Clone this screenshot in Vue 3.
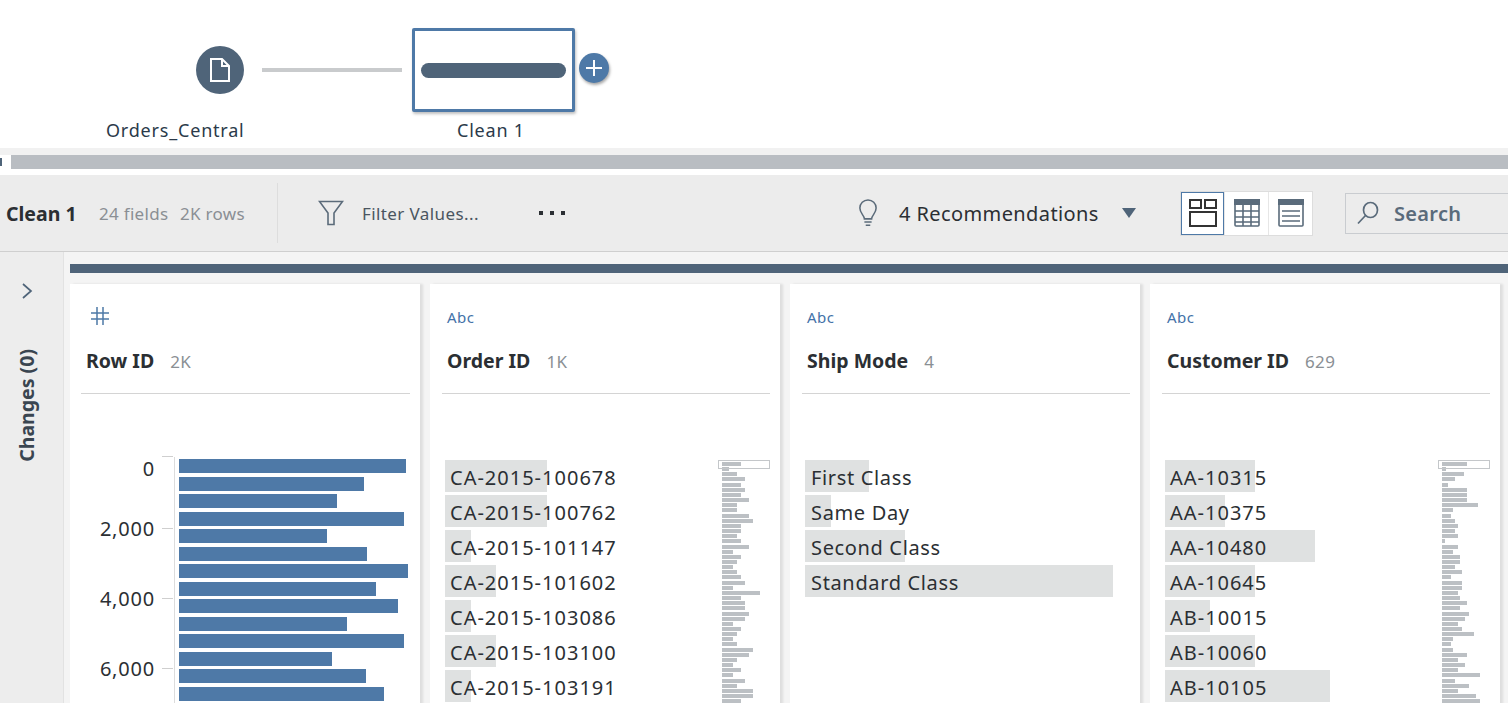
<template>
  <div class="app">
    <div class="flow-pane">
      <div class="step-icon">
        <svg width="24" height="28" viewBox="0 0 24 28" fill="none" stroke="#fff" stroke-width="2">
          <path d="M3 3h11l7 7v15H3z" />
          <path d="M14 3v7h7" />
        </svg>
      </div>
      <div class="step-label source-label">Orders_Central</div>
      <div class="link"></div>
      <div class="clean-box"><div class="clean-bar"></div></div>
      <div class="add-btn">
        <svg width="18" height="18" viewBox="0 0 18 18" stroke="#fff" stroke-width="2"><path d="M9 1v16M1 9h16" /></svg>
      </div>
      <div class="step-label clean-label">Clean 1</div>
    </div>

    <div class="splitter">
      <span class="grip"></span>
      <div class="thumb"></div>
    </div>

    <div class="toolbar">
      <div class="tb-title">Clean 1</div>
      <div class="tb-meta">24 fields</div>
      <div class="tb-meta second">2K rows</div>
      <div class="tb-divider"></div>
      <svg class="filter-icon" width="26" height="26" viewBox="0 0 26 26" fill="none" stroke="#5b6b7a" stroke-width="1.6">
        <path d="M1.500 1.500h23L16 13v11.500h-6V13z" />
      </svg>
      <div class="tb-filter">Filter Values...</div>
      <div class="tb-dots"><i></i><i></i><i></i></div>
      <div class="tb-spacer"></div>
      <svg class="bulb" width="20" height="28" viewBox="0 0 22 31" fill="none" stroke="#5b6b7a" stroke-width="1.7">
        <path d="M7 22c0-4-5-6-5-12a9 9 0 0 1 18 0c0 6-5 8-5 12z" />
        <path d="M7 25.500h8M8.500 29h5" />
      </svg>
      <div class="tb-rec">4 Recommendations</div>
      <div class="caret"></div>
      <div class="views">
        <div class="view active">
          <svg width="28" height="28" viewBox="0 0 28 28" fill="none" stroke="#333" stroke-width="2">
            <rect x="1" y="1" width="11" height="8" />
            <rect x="16" y="1" width="11" height="8" />
            <rect x="1" y="13" width="26" height="14" />
          </svg>
        </div>
        <div class="view">
          <svg width="26" height="28" viewBox="0 0 26 28" fill="none" stroke="#5a6b7b" stroke-width="1.6">
            <rect x="1" y="1" width="24" height="26" rx="1" />
            <path d="M0 3h26" stroke-width="6" />
            <path d="M1 12h24M1 18h24M1 23h24M9 6v21M17 6v21" />
          </svg>
        </div>
        <div class="view">
          <svg width="26" height="28" viewBox="0 0 26 28" fill="none" stroke="#5a6b7b" stroke-width="1.6">
            <rect x="1" y="1" width="24" height="26" rx="1" />
            <path d="M0 3h26" stroke-width="6" />
            <path d="M4 12h18M4 17h18M4 22h18" />
          </svg>
        </div>
      </div>
      <div class="search">
        <svg width="22" height="24" viewBox="0 0 22 24" fill="none" stroke="#5a6b7b" stroke-width="1.7">
          <ellipse cx="13.500" cy="9" rx="7" ry="7.500" />
          <path d="M8.500 14.500L1 22.500" />
        </svg>
        <span>Search</span>
      </div>
    </div>

    <div class="content">
      <aside class="changes">
        <svg width="12" height="18" viewBox="0 0 12 18" fill="none" stroke="#4f6479" stroke-width="1.7">
          <path d="M2 2l8 7-8 7" />
        </svg>
        <div class="changes-label">Changes (0)</div>
      </aside>

      <main class="profile">
        <div class="profile-bar"></div>
        <div class="cards">
          <section class="card">
            <header class="card-head first">
              <div class="type">
                <svg width="18" height="18" viewBox="0 0 18 18" stroke="#4e79a7" stroke-width="1.5">
                  <path d="M6 0v18M12 0v18M0 6h18M0 12h18" />
                </svg>
              </div>
              <div class="title"><b>Row ID</b><span>2K</span></div>
            </header>
            <div class="hist">
              <div class="axis">
                <div v-for="t in ticks" :key="t" class="tick" :class="{ zero: t === '0' }">
                  <span>{{ t }}</span><i></i>
                </div>
              </div>
              <div class="bars">
                <div v-for="(w, i) in rowBars" :key="i" class="bar" :style="{ width: w + 'px' }"></div>
              </div>
            </div>
          </section>

          <section v-for="col in columns" :key="col.name" class="card">
            <header class="card-head">
              <div class="type abc">Abc</div>
              <div class="title"><b>{{ col.name }}</b><span>{{ col.count }}</span></div>
            </header>
            <div class="values">
              <div class="list" :class="{ code: col.mini }">
                <div v-for="v in col.values" :key="v[0]" class="value">
                  <div class="fill" :style="{ width: v[1] + 'px' }"></div>
                  <span>{{ v[0] }}</span>
                </div>
              </div>
              <div v-if="col.mini" class="mini">
                <div class="mini-window"></div>
                <div v-for="(w, i) in col.mini" :key="i" class="mini-bar" :style="{ width: w + 'px' }"></div>
              </div>
            </div>
          </section>
        </div>
      </main>
    </div>
  </div>
</template>

<script setup>
const ticks = ['0', '2,000', '4,000', '6,000']
const rowBars = [227, 185, 158, 225, 148, 188, 229, 197, 219, 168, 225, 153, 187, 205]

const orderEnds = [123, 87, 111, 135, 123, 135, 123, 147, 111, 111, 147, 159, 123, 123, 111, 123, 147, 99, 123, 111, 99, 111, 123, 135, 99, 179, 123, 135, 135, 147, 135, 99, 123, 111, 99, 111, 159, 147, 111, 99, 123, 99, 135, 111, 159, 159, 123]
const customerEnds = [143, 80, 135, 108, 87, 143, 143, 143, 177, 101, 95, 108, 115, 108, 115, 78, 115, 101, 123, 123, 108, 129, 95, 129, 129, 115, 122, 143, 122, 150, 136, 115, 129, 163, 101, 95, 101, 143, 115, 136, 115, 181, 108, 150, 115, 170, 181]

const columns = [
  {
    name: 'Order ID',
    count: '1K',
    values: [
      ['CA-2015-100678', 102],
      ['CA-2015-100762', 102],
      ['CA-2015-101147', 26],
      ['CA-2015-101602', 51],
      ['CA-2015-103086', 26],
      ['CA-2015-103100', 51],
      ['CA-2015-103191', 26]
    ],
    mini: orderEnds.map(e => (e - 65) / 3)
  },
  {
    name: 'Ship Mode',
    count: '4',
    values: [
      ['First Class', 64],
      ['Same Day', 26],
      ['Second Class', 100],
      ['Standard Class', 308]
    ]
  },
  {
    name: 'Customer ID',
    count: '629',
    values: [
      ['AA-10315', 90],
      ['AA-10375', 60],
      ['AA-10480', 150],
      ['AA-10645', 90],
      ['AB-10015', 45],
      ['AB-10060', 90],
      ['AB-10105', 165]
    ],
    mini: customerEnds.map(e => (e - 68) / 3)
  }
]
</script>

<style>
html, body {
  margin: 0;
  background: #fff;
  overflow: hidden;
}
</style>

<style scoped>
.app {
  width: 1508px;
  height: 703px;
  overflow: hidden;
  font-family: "Noto Sans", sans-serif;
  color: #2b2f33;
  display: flex;
  flex-direction: column;
}

/* flow canvas, nodes sit at free positions */
.flow-pane {
  position: relative;
  height: 148px;
  flex: none;
  background: #fff;
}
.step-icon {
  position: absolute;
  left: 196px;
  top: 46px;
  width: 48px;
  height: 48px;
  border-radius: 50%;
  background: #4f6479;
  display: flex;
  align-items: center;
  justify-content: center;
}
.step-label {
  position: absolute;
  top: 118px;
  font-size: 18px;
  line-height: 24px;
  letter-spacing: 0.8px;
  color: #2b3a4a;
  white-space: nowrap;
}
.source-label { left: 106px; }
.clean-label { left: 457px; }
.link {
  position: absolute;
  left: 262px;
  top: 68px;
  width: 140px;
  height: 4px;
  background: #c9cbcd;
}
.clean-box {
  position: absolute;
  left: 412px;
  top: 28px;
  width: 157px;
  height: 78px;
  border: 3px solid #4e79a7;
  border-radius: 2px;
  box-shadow: 1px 2px 3px rgba(0, 0, 0, 0.25);
  background: #fff;
}
.clean-bar {
  margin: 32px 0 0 6px;
  width: 145px;
  height: 15px;
  border-radius: 8px;
  background: #4f6479;
}
.add-btn {
  position: absolute;
  left: 579px;
  top: 53px;
  width: 30px;
  height: 30px;
  border-radius: 50%;
  background: #4e79a7;
  box-shadow: 1px 2px 3px rgba(0, 0, 0, 0.35);
  display: flex;
  align-items: center;
  justify-content: center;
}

.splitter {
  flex: none;
  height: 27px;
  box-sizing: border-box;
  padding: 7px 0 6px 11px;
  background: linear-gradient(#f1f1f1 0 7px, #fff 7px);
  position: relative;
}
.thumb {
  height: 14px;
  background: #b9bdc2;
}
.grip {
  position: absolute;
  left: 0;
  top: 10px;
  width: 2px;
  height: 8px;
  background: #4f6479;
}

.toolbar {
  flex: none;
  height: 77px;
  box-sizing: border-box;
  border-bottom: 1px solid #cfcfcf;
  background: #ececec;
  display: flex;
  align-items: center;
  padding-left: 6px;
  overflow: hidden;
}
.toolbar > * { flex: none; }
.tb-title {
  font-size: 19.500px;
  font-weight: 700;
  width: 93px;
  white-space: nowrap;
}
.tb-meta {
  font-size: 17px;
  letter-spacing: 0.3px;
  color: #8a8f94;
  width: 81px;
  white-space: nowrap;
}
.tb-meta.second { width: 65px; }
.tb-divider {
  width: 1px;
  height: 60px;
  background: #dddddd;
  margin-left: 32px;
  margin-right: 40px;
}
.filter-icon { margin-right: 18px; }
.tb-filter {
  font-size: 17px;
  letter-spacing: 0.4px;
  color: #4a5560;
  width: 177px;
  white-space: nowrap;
}
.tb-dots {
  display: flex;
  gap: 7px;
}
.tb-dots i {
  width: 4px;
  height: 4px;
  background: #2b2f33;
}
.tb-spacer { width: 293px; }
.bulb { margin-right: 21px; }
.tb-rec {
  font-size: 20px;
  letter-spacing: 0.4px;
  line-height: 28px;
  padding-top: 1px;
  width: 223px;
  white-space: nowrap;
}
.caret {
  width: 0;
  height: 0;
  border-left: 7px solid transparent;
  border-right: 7px solid transparent;
  border-top: 10px solid #4f6479;
  margin-right: 44px;
}
.views {
  display: flex;
  height: 45px;
  background: #fff;
  box-sizing: border-box;
  border: 1px solid #ddd;
  margin-right: 32px;
}
.view {
  width: 44px;
  display: flex;
  align-items: center;
  justify-content: center;
  box-sizing: border-box;
  border-left: 1px solid #e6e6e6;
}
.view.active {
  width: 43px;
  border: 1px solid #4e79a7;
}
.search {
  width: 180px;
  height: 41px;
  box-sizing: border-box;
  border: 1px solid #c9ccd0;
  display: flex;
  align-items: center;
  gap: 15px;
  padding-left: 11px;
  font-size: 20px;
  letter-spacing: 0.3px;
  font-weight: 600;
  color: #5a6b7b;
}

.content {
  flex: 1;
  display: flex;
  min-height: 0;
  background: #f4f4f4;
}
.changes {
  flex: none;
  width: 64px;
  background: #ededed;
  border-right: 1px solid #e2e2e2;
  box-sizing: border-box;
  display: flex;
  flex-direction: column;
  align-items: center;
  padding: 30px 10px 0 0;
}
.changes-label {
  margin-top: 49px;
  writing-mode: vertical-rl;
  transform: rotate(180deg);
  font-size: 19.500px;
  font-weight: 700;
  color: #3a4550;
  white-space: nowrap;
}
.profile {
  flex: 1;
  min-width: 0;
  padding: 12px 0 0 6px;
}
.profile-bar {
  height: 9px;
  background: #4f6479;
}
.cards {
  display: flex;
  gap: 10px;
  margin-top: 11px;
  height: 460px;
}
.card {
  flex: none;
  width: 350px;
  background: #fff;
  box-shadow: 3px 0 2px #dedede;
}
.card-head {
  height: 109px;
  margin: 0 10px 0 12px;
  border-bottom: 1px solid #d4d4d4;
  padding-left: 5px;
}
.card-head.first {
  margin-left: 11px;
  padding-left: 5px;
}
.type {
  height: 65px;
  padding-top: 23px;
  box-sizing: border-box;
  padding-left: 5px;
}
.type.abc {
  font-size: 15px;
  letter-spacing: 0.5px;
  line-height: 20px;
  color: #4472a8;
  padding-left: 0;
  padding-top: 23px;
}
.title {
  display: flex;
  align-items: baseline;
  gap: 16px;
  line-height: 24px;
  font-size: 17px;
  letter-spacing: 0.4px;
  color: #8a8f94;
}
.title b {
  font-size: 19.500px;
  letter-spacing: 0;
  color: #2b2f33;
}
.hist {
  display: flex;
  padding-top: 63px;
}
.axis {
  width: 104px;
  flex: none;
  border-right: 1px solid #dcdcdc;
  height: 300px;
}
.tick {
  height: 70px;
  display: flex;
  align-items: center;
  justify-content: flex-end;
  font-size: 20px;
  letter-spacing: 0.8px;
  color: #2b2f33;
  padding-right: 1px;
}
.tick span { margin-right: 7px; }
.tick i {
  width: 11px;
  height: 1px;
  background: #cfcfcf;
}
.tick.zero {
  height: 38px;
  margin-top: -1px;
  align-items: flex-start;
}
.tick.zero span { line-height: 26px; }
.tick:nth-child(2) { margin-top: -1px; }
.bars {
  padding: 2px 0 0 4px;
  display: flex;
  flex-direction: column;
  gap: 3.500px;
}
.bar {
  height: 14px;
  background: #4e79a7;
}
.values {
  display: flex;
  justify-content: space-between;
  padding: 66px 10px 0 15px;
}
.list {
  display: flex;
  flex-direction: column;
  gap: 3px;
}
.value {
  position: relative;
  height: 32px;
  font-size: 20px;
  letter-spacing: 0.65px;
  line-height: 35px;
  padding-left: 6px;
  white-space: nowrap;
}
.list.code .value {
  letter-spacing: 1px;
  padding-left: 5px;
}
.value span { position: relative; }
.fill {
  position: absolute;
  left: 0;
  top: 0;
  bottom: 0;
  background: #dfe1e1;
}
.mini {
  position: relative;
  width: 52px;
  flex: none;
  padding-top: 2px;
  box-sizing: border-box;
  display: flex;
  flex-direction: column;
  gap: 1.170px;
}
.mini-bar {
  height: 4px;
  margin-left: 4px;
  background: #bcc0c4;
}
.mini-window {
  position: absolute;
  left: 0;
  top: 0;
  width: 52px;
  height: 9px;
  box-sizing: border-box;
  border: 1px solid #c4c7ca;
}
</style>
